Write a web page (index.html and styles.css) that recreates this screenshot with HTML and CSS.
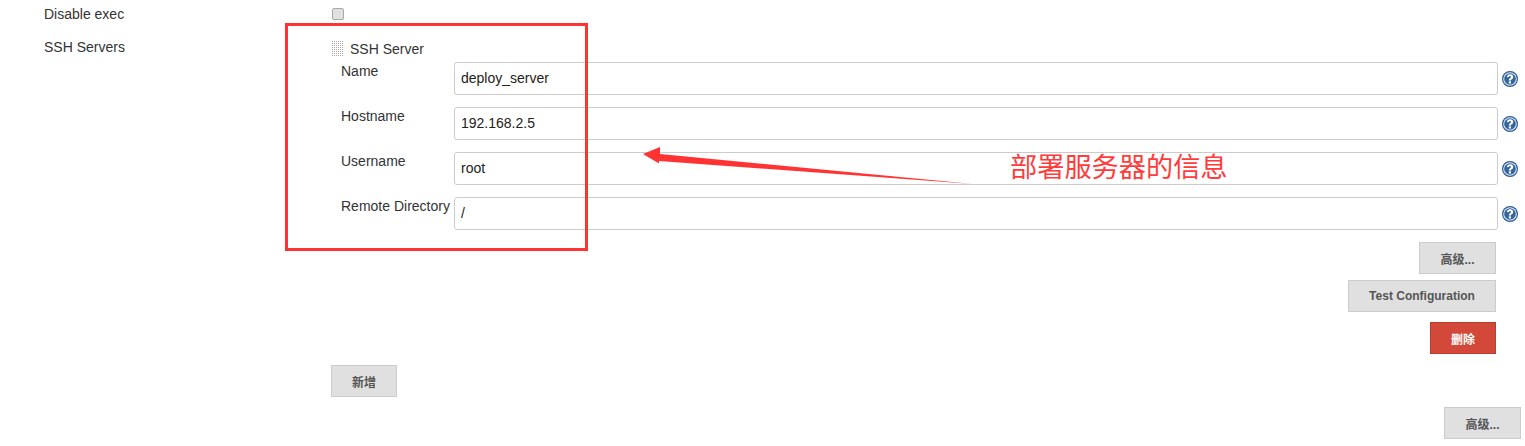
FILE: index.html
```html
<!DOCTYPE html>
<html lang="zh-CN">
<head>
    <meta charset="UTF-8">
    <meta name="viewport" content="width=device-width, initial-scale=1.0">
    <title>SSH Servers</title>
    <link rel="stylesheet" href="styles.css">
</head>
<body>
    <div class="form">
        <div class="top-row">
            <div class="top-label">Disable exec</div>
            <input type="checkbox" class="check">
        </div>

        <div class="servers">
            <div class="servers-label">SSH Servers</div>
            <div class="servers-body">
                <div class="chunk-head">
                    <span class="handle"></span>
                    <span>SSH Server</span>
                </div>

                <div class="field">
                    <label>Name</label>
                    <div class="text-box">deploy_server</div>
                    <svg class="help" viewBox="0 0 16 16"><use href="#help-icon"/></svg>
                </div>
                <div class="field">
                    <label>Hostname</label>
                    <div class="text-box">192.168.2.5</div>
                    <svg class="help" viewBox="0 0 16 16"><use href="#help-icon"/></svg>
                </div>
                <div class="field">
                    <label>Username</label>
                    <div class="text-box">root</div>
                    <svg class="help" viewBox="0 0 16 16"><use href="#help-icon"/></svg>
                </div>
                <div class="field">
                    <label>Remote Directory</label>
                    <div class="text-box">/</div>
                    <svg class="help" viewBox="0 0 16 16"><use href="#help-icon"/></svg>
                </div>

                <div class="actions">
                    <button class="btn btn-adv">高级...</button>
                    <button class="btn btn-test">Test Configuration</button>
                    <button class="btn btn-danger">删除</button>
                </div>

                <button class="btn btn-add">新增</button>
            </div>
        </div>

        <div class="bottom-row">
            <button class="btn btn-adv">高级...</button>
        </div>
    </div>

    <!-- annotations drawn on top of the form -->
    <div class="note-box"></div>
    <svg class="note-arrow" viewBox="0 0 350 50">
        <polygon points="12,10 29,3 29,10 342,40 28,17 28,19.500"/>
    </svg>
    <div class="note-text">部署服务器的信息</div>

    <svg class="defs" width="0" height="0">
        <defs>
            <g id="help-icon">
                <circle cx="8" cy="8" r="8" fill="#2a5a97"/>
                <circle cx="8" cy="8" r="6.800" fill="#e4ebf4"/>
                <circle cx="8" cy="8" r="5.800" fill="#33659f"/>
                <path d="M4.900 6.200C5 4.300 6.300 3.200 8.100 3.200c1.900 0 3.100 1.100 3.100 2.700 0 1.200-.7 1.800-1.400 2.300-.6 .5-.8 .7-.8 1.400H6.800c0-1.200 .4-1.800 1.200-2.400 .6-.5 .9-.8 .9-1.300 0-.6-.3-.9-.9-.9-.7 0-1.100 .4-1.200 1.100z" fill="#fff"/>
                <rect x="6.800" y="10.300" width="2.200" height="2.200" fill="#fff"/>
            </g>
        </defs>
    </svg>
</body>
</html>
```

FILE: styles.css
```css
* {
    margin: 0;
    padding: 0;
    box-sizing: border-box;
}

body {
    font-family: "Liberation Sans", "Noto Sans CJK SC", Arial, sans-serif;
    font-size: 14px;
    color: #333;
    background: #fff;
    position: relative;
    height: 446px;
    overflow: hidden;
}

.form {
    padding: 0 4px 0 44px;
}

.top-row {
    display: flex;
    height: 29px;
    padding-top: 6px;
}

.top-label {
    width: 287px;
    line-height: 17px;
}

.check {
    appearance: none;
    width: 12px;
    height: 12px;
    margin: 2px 0 0 1px;
    background: #e0e0e0;
    border: 1px solid #a9a9a9;
    border-radius: 2px;
}

.servers {
    display: flex;
}

.servers-label {
    width: 287px;
    padding-top: 10px;
    line-height: 17px;
}

.servers-body {
    flex: 1;
}

.chunk-head {
    display: flex;
    align-items: center;
    gap: 7px;
    height: 33px;
    padding-top: 7px;
}

.handle {
    width: 12px;
    height: 16px;
    background: conic-gradient(#a8a8a8 25%, transparent 0) 0 0 / 2px 2px;
}

.field {
    display: flex;
    height: 45px;
    padding-left: 10px;
}

.field label {
    width: 113px;
    padding-top: 1px;
    line-height: 17px;
    white-space: nowrap;
}

.text-box {
    width: 1044px;
    height: 33px;
    padding-left: 6px;
    line-height: 31px;
    color: #222;
    border: 1px solid #ccc;
    border-radius: 3px;
    background: #fff;
}

.help {
    width: 16px;
    height: 16px;
    margin: 9px 0 0 4px;
}

.actions {
    display: flex;
    flex-direction: column;
    align-items: flex-end;
    gap: 6px;
    width: 1165px;
}

.btn {
    display: block;
    height: 32px;
    font-family: inherit;
    font-size: 12px;
    font-weight: 700;
    color: #555;
    background: #e0e0e0;
    border: 1px solid #ccc;
}

.btn-adv {
    width: 77px;
}

.btn-test {
    width: 148px;
}

.btn-danger {
    width: 66px;
    margin-top: 4px;
    color: #fff;
    background: #d24939;
    border-color: #bd3b2c;
}

.btn-add {
    width: 66px;
    margin-top: 11px;
}

.bottom-row {
    display: flex;
    justify-content: flex-end;
    margin-top: 10px;
}

.note-box {
    position: absolute;
    left: 285px;
    top: 23px;
    width: 303px;
    height: 228px;
    border: 3px solid #ff3333;
}

.note-arrow {
    position: absolute;
    left: 631px;
    top: 144px;
    width: 350px;
    height: 50px;
    fill: #ff3333;
}

.note-text {
    position: absolute;
    left: 1010px;
    top: 152px;
    font-size: 27.2px;
    line-height: 32px;
    color: #ff3b3b;
    white-space: nowrap;
}

.defs {
    position: absolute;
}
```
